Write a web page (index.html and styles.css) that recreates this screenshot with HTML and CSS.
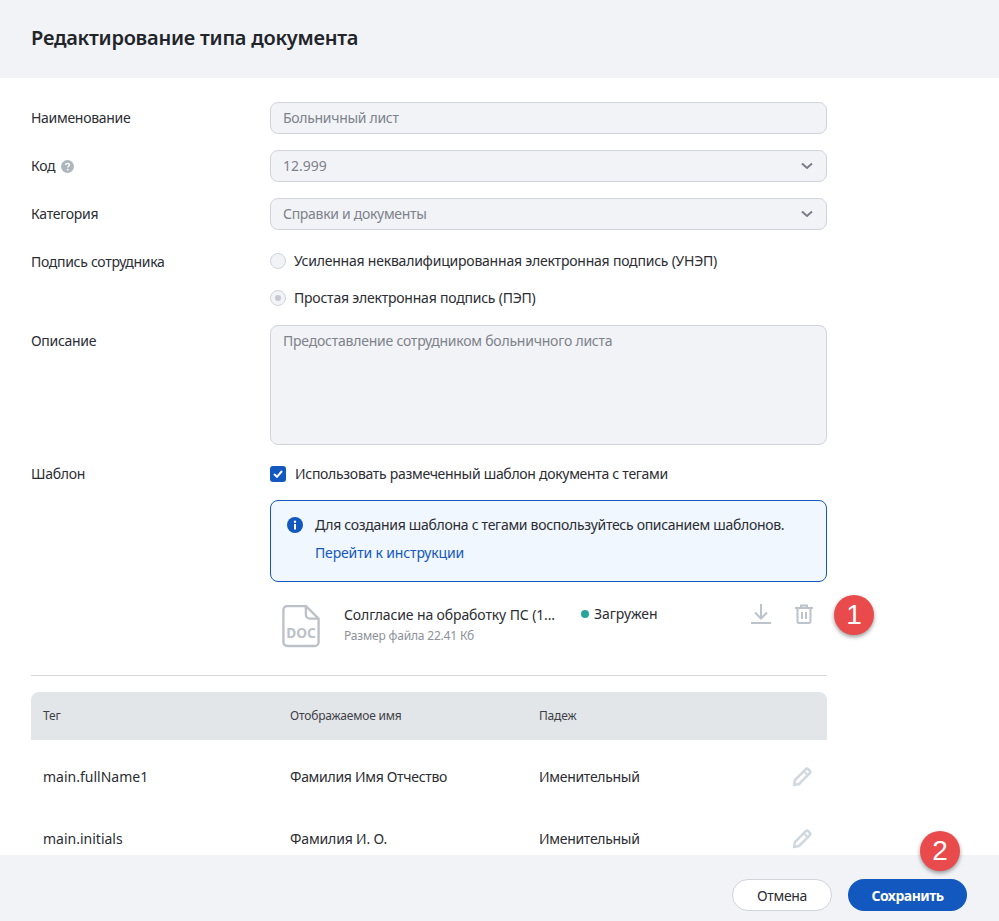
FILE: index.html
```html
<!DOCTYPE html>
<html lang="ru">
<head>
    <meta charset="UTF-8">
    <title>Редактирование типа документа</title>
    <link rel="stylesheet" href="styles.css">
</head>
<body>
    <div class="modal">
        <div class="modal-header">
            <h1>Редактирование типа документа</h1>
        </div>

        <div class="modal-body">
            <div class="form-row">
                <div class="form-label">Наименование</div>
                <div class="form-field">
                    <div class="input">Больничный лист</div>
                </div>
            </div>

            <div class="form-row">
                <div class="form-label">Код
                    <svg class="help-icon" width="13" height="13" viewBox="0 0 13 13"><circle cx="6.5" cy="6.5" r="6.5" fill="#adb5bd"/><path d="M4.6 5.1c0-1 .8-1.7 1.9-1.7s1.9.7 1.9 1.6c0 1.300-1.600 1.300-1.600 2.500" fill="none" stroke="#fff" stroke-width="1.400"/><circle cx="6.700" cy="9.700" r=".9" fill="#fff"/></svg>
                </div>
                <div class="form-field">
                    <div class="input select"><span class="plain">12.999</span>
                        <svg class="chevron" width="12" height="8" viewBox="0 0 12 8"><path d="M1 1.500l5 4.500 5-4.500" fill="none" stroke="#7a7f87" stroke-width="2"/></svg>
                    </div>
                </div>
            </div>

            <div class="form-row">
                <div class="form-label">Категория</div>
                <div class="form-field">
                    <div class="input select">Справки и документы
                        <svg class="chevron" width="12" height="8" viewBox="0 0 12 8"><path d="M1 1.500l5 4.500 5-4.500" fill="none" stroke="#7a7f87" stroke-width="2"/></svg>
                    </div>
                </div>
            </div>

            <div class="form-row form-row-radio">
                <div class="form-label">Подпись сотрудника</div>
                <div class="form-field">
                    <div class="radio"><span class="radio-mark"></span>Усиленная неквалифицированная электронная подпись (УНЭП)</div>
                    <div class="radio"><span class="radio-mark radio-checked"></span>Простая электронная подпись (ПЭП)</div>
                </div>
            </div>

            <div class="form-row">
                <div class="form-label">Описание</div>
                <div class="form-field">
                    <div class="textarea">Предоставление сотрудником больничного листа</div>
                </div>
            </div>

            <div class="form-row form-row-template">
                <div class="form-label">Шаблон</div>
                <div class="form-field">
                    <div class="checkbox">
                        <span class="checkbox-mark">
                            <svg width="10" height="8" viewBox="0 0 10 8"><path d="M1 4l3 2.800L9 1" fill="none" stroke="#fff" stroke-width="2"/></svg>
                        </span>
                        Использовать размеченный шаблон документа с тегами
                    </div>

                    <div class="info-box">
                        <svg class="info-icon" width="16" height="16" viewBox="0 0 16 16"><circle cx="8" cy="8" r="8" fill="#1358bf"/><rect x="7" y="7" width="2" height="5.500" fill="#fff"/><circle cx="8" cy="4.700" r="1.200" fill="#fff"/></svg>
                        <div>
                            <div class="info-text">Для создания шаблона с тегами воспользуйтесь описанием шаблонов.</div>
                            <a class="info-link" href="#">Перейти к инструкции</a>
                        </div>
                    </div>

                    <div class="file-row">
                        <svg class="file-icon" width="38" height="43" viewBox="0 0 38 44"><path d="M5 1h19l13 13v24a4 4 0 0 1-4 4H5a4 4 0 0 1-4-4V5a4 4 0 0 1 4-4z" fill="none" stroke="#bcc1c7" stroke-width="2.400"/><path d="M24 1v9a4 4 0 0 0 4 4h9" fill="none" stroke="#bcc1c7" stroke-width="2.400"/><text x="19" y="34" text-anchor="middle" class="file-ext">DOC</text></svg>
                        <div class="file-info">
                            <div class="file-name">Солгласие на обработку ПС (1...</div>
                            <div class="file-size">Размер файла 22.41 Кб</div>
                        </div>
                        <div class="file-status"><span class="status-dot"></span>Загружен</div>
                        <svg class="file-action" width="22" height="22" viewBox="0 0 22 22"><path d="M11 1v14M5 9.500l6 6 6-6" fill="none" stroke="#bcc3cc" stroke-width="2"/><rect x="1" y="19" width="20" height="2" fill="#bcc3cc"/></svg>
                        <svg class="file-action" width="18" height="20" viewBox="0 0 18 20"><path d="M0 4h18M6 4V1.500h6V4M2.500 4v13.500a1.500 1.500 0 0 0 1.500 1.500h10a1.500 1.500 0 0 0 1.500-1.500V4M7 8v7M11 8v7" fill="none" stroke="#bcc3cc" stroke-width="2"/></svg>
                    </div>
                </div>
            </div>

            <div class="divider"></div>

            <div class="tag-table">
                <div class="tag-head">
                    <div>Тег</div>
                    <div>Отображаемое имя</div>
                    <div>Падеж</div>
                    <div></div>
                </div>
                <div class="tag-row">
                    <div class="plain">main.fullName1</div>
                    <div>Фамилия Имя Отчество</div>
                    <div>Именительный</div>
                    <svg class="edit-icon" width="20" height="20" viewBox="0 0 20 20"><path d="M13.600 2.400a2 2 0 0 1 2.800 0l1.200 1.200a2 2 0 0 1 0 2.800L7 17l-5 1 1-5z" fill="none" stroke="#d0d8e0" stroke-width="2.600" stroke-linejoin="round"/><path d="M12 4.500l3.500 3.500" stroke="#d0d8e0" stroke-width="2"/></svg>
                </div>
                <div class="tag-row">
                    <div class="plain">main.initials</div>
                    <div class="wide">Фамилия И. О.</div>
                    <div>Именительный</div>
                    <svg class="edit-icon" width="20" height="20" viewBox="0 0 20 20"><path d="M13.600 2.400a2 2 0 0 1 2.800 0l1.200 1.200a2 2 0 0 1 0 2.800L7 17l-5 1 1-5z" fill="none" stroke="#d0d8e0" stroke-width="2.600" stroke-linejoin="round"/><path d="M12 4.500l3.500 3.500" stroke="#d0d8e0" stroke-width="2"/></svg>
                </div>
            </div>
        </div>

        <div class="modal-footer">
            <button class="btn btn-cancel">Отмена</button>
            <button class="btn btn-save">Сохранить</button>
        </div>

        <div class="step-badge step-one">1</div>
        <div class="step-badge step-two">2</div>
    </div>
</body>
</html>
```

FILE: styles.css
```css
* {
    margin: 0;
    padding: 0;
    box-sizing: border-box;
}

body {
    font-family: "Noto Sans", "Liberation Sans", sans-serif;
    font-size: 14px;
    line-height: 20px;
    letter-spacing: -0.3px;
    color: #2b2d33;
    background: #fff;
    overflow: hidden;
}

.plain {
    letter-spacing: 0;
}

.wide {
    letter-spacing: -0.15px;
}

.modal {
    position: relative;
    display: flex;
    flex-direction: column;
    height: 921px;
}

.modal-header {
    flex: none;
    height: 78px;
    padding: 24px 31px 0;
    background: #f1f3f7;
}

.modal-header h1 {
    font-size: 20px;
    line-height: 28px;
    font-weight: 600;
    letter-spacing: -0.24px;
    color: #22242a;
}

.modal-body {
    flex: 1;
    min-height: 0;
    overflow: hidden;
    padding: 24px 172px 0 31px;
}

.form-row {
    display: flex;
    margin-bottom: 16px;
}

.form-label {
    flex: none;
    width: 239px;
    padding-top: 6px;
}

.form-field {
    flex: 1;
    min-width: 0;
}

.help-icon {
    margin-left: 2px;
    vertical-align: -2px;
}

.input {
    display: flex;
    align-items: center;
    justify-content: space-between;
    height: 32px;
    padding: 0 13px 0 12px;
    background: #f1f3f7;
    border: 1px solid #d0d4da;
    border-radius: 8px;
    color: #7e828a;
}

.textarea {
    height: 120px;
    padding: 5px 12px;
    background: #f1f3f7;
    border: 1px solid #d0d4da;
    border-radius: 8px;
    letter-spacing: -0.23px;
    color: #7e828a;
}

.form-row-radio {
    margin-bottom: 17px;
}

.radio {
    display: flex;
    align-items: center;
    height: 20px;
    margin-top: 5px;
    margin-bottom: 17px;
    letter-spacing: -0.22px;
}

.radio:last-child {
    margin-bottom: 0;
}

.radio-mark {
    flex: none;
    width: 16px;
    height: 16px;
    margin-right: 8px;
    background: #f1f3f7;
    border: 1px solid #d0d4da;
    border-radius: 50%;
}

.radio-checked {
    position: relative;
}

.radio-checked::after {
    content: "";
    position: absolute;
    top: 4px;
    left: 4px;
    width: 6px;
    height: 6px;
    background: #c5c9d0;
    border-radius: 50%;
}

.form-row-template {
    margin-bottom: 0;
}

.form-row-template .form-label {
    padding-top: 3px;
}

.checkbox {
    display: flex;
    align-items: center;
    height: 20px;
    margin-top: 3px;
}

.checkbox-mark {
    flex: none;
    display: flex;
    align-items: center;
    justify-content: center;
    width: 16px;
    height: 16px;
    margin-right: 9px;
    background: #1358bf;
    border-radius: 3px;
}

.info-box {
    display: flex;
    height: 82px;
    margin-top: 16px;
    padding: 14px 16px;
    background: #f1f7fe;
    border: 1px solid #1358bf;
    border-radius: 8px;
}

.info-icon {
    flex: none;
    margin: 2px 12px 0 0;
}

.info-link {
    display: block;
    margin-top: 8px;
    letter-spacing: -0.15px;
    color: #1358bf;
    text-decoration: none;
}

.file-row {
    display: flex;
    align-items: center;
    height: 60px;
    margin-top: 11px;
    padding: 0 14px 0 12px;
}

.file-icon {
    flex: none;
    margin-top: 6px;
    margin-right: 24px;
}

.file-ext {
    font-size: 14px;
    font-weight: 700;
    letter-spacing: 0;
    fill: #bcc1c7;
}

.file-info {
    flex: none;
    width: 237px;
    margin-top: 2px;
}

.file-name {
    letter-spacing: -0.12px;
    color: #2b2d33;
}

.file-size {
    margin-top: 3px;
    font-size: 12px;
    line-height: 16px;
    letter-spacing: -0.18px;
    color: #8d9199;
}

.file-status {
    display: flex;
    align-items: center;
    flex: 1;
    margin-top: -19px;
    letter-spacing: -0.05px;
}

.status-dot {
    width: 8px;
    height: 8px;
    margin-right: 5px;
    background: #26a69a;
    border-radius: 50%;
}

.file-action {
    flex: none;
    margin-left: 23px;
    margin-top: -19px;
}

.divider {
    height: 1px;
    margin-top: 22px;
    background: #d5d8dc;
}

.tag-table {
    margin-top: 16px;
}

.tag-head,
.tag-row {
    display: grid;
    grid-template-columns: 247px 249px 1fr 20px;
    align-items: center;
    padding: 0 15px 0 12px;
}

.tag-head {
    height: 48px;
    background: #e3e6e9;
    border-radius: 8px 8px 0 0;
    font-size: 12px;
    letter-spacing: -0.18px;
    color: #3d4046;
}

.tag-row {
    height: 62px;
}

.tag-head + .tag-row {
    margin-top: 6px;
}

.modal-footer {
    flex: none;
    display: flex;
    justify-content: flex-end;
    gap: 16px;
    height: 66px;
    padding: 24px 32px 0;
    background: #f1f3f7;
}

.btn {
    height: 32px;
    border-radius: 16px;
    font-family: inherit;
    font-size: 14px;
    letter-spacing: inherit;
}

.btn-cancel {
    width: 100px;
    background: #fff;
    border: 1px solid #d0d4da;
    color: #2b2d33;
}

.btn-save {
    width: 119px;
    background: #1358bf;
    border: none;
    font-weight: 700;
    letter-spacing: -0.5px;
    color: #fff;
}

.step-badge {
    position: absolute;
    width: 40px;
    height: 40px;
    background: #e94a4c;
    border-radius: 50%;
    box-shadow: 0 2px 4px rgba(0,0,0,0.4);
    font-family: "Liberation Sans", sans-serif;
    font-size: 28px;
    line-height: 40px;
    letter-spacing: 0;
    text-align: center;
    color: #fff;
}

.step-one {
    top: 595px;
    left: 834px;
}

.step-two {
    top: 831px;
    left: 920px;
}
```
